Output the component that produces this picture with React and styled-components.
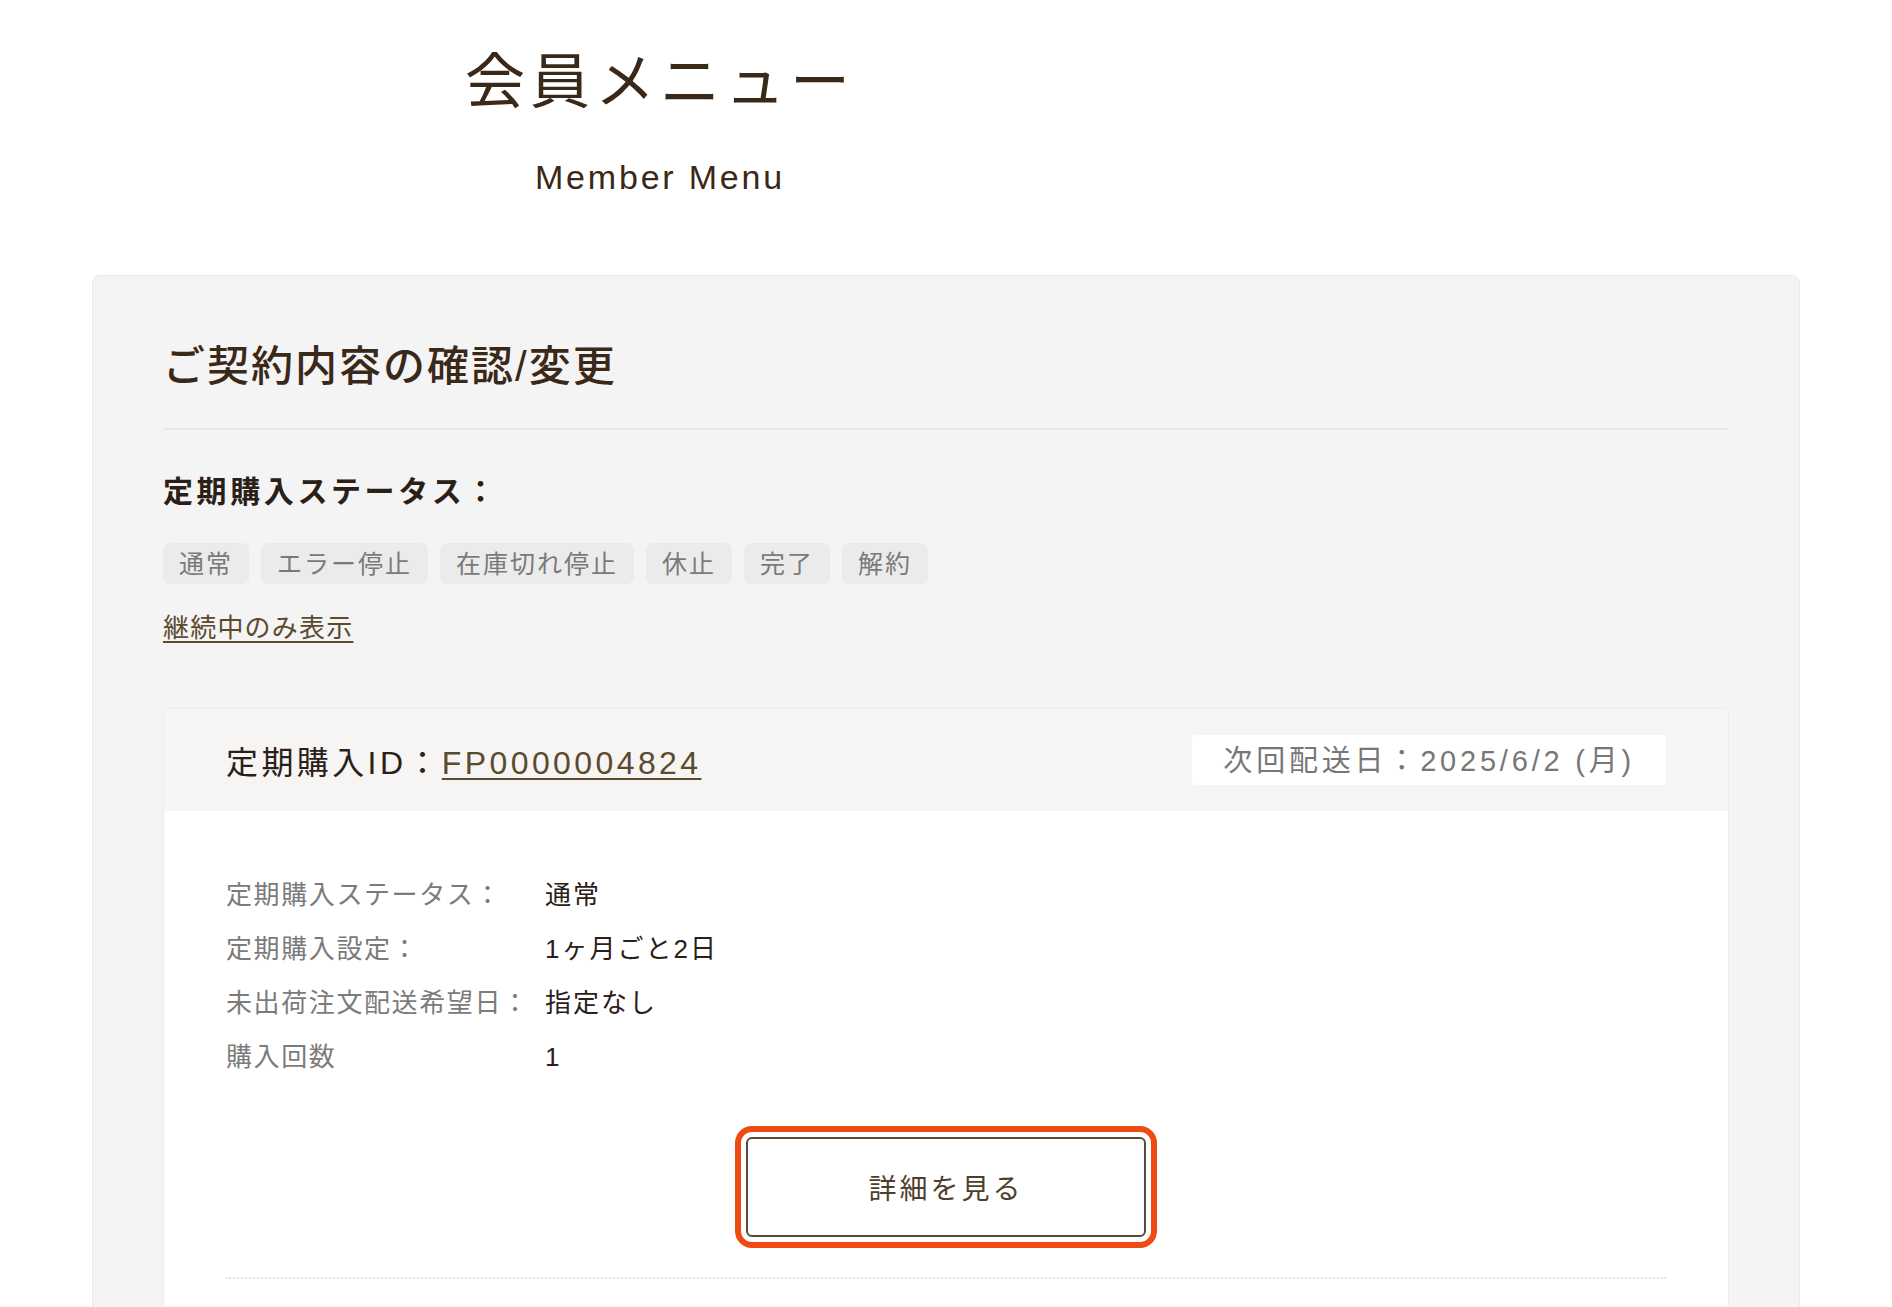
import React from 'react';
import styled, { createGlobalStyle } from 'styled-components';

const GlobalStyle = createGlobalStyle`
  html, body {
    margin: 0;
    padding: 0;
    background: #fff;
  }
  body {
    font-family: "Liberation Sans", "Noto Sans CJK JP", sans-serif;
    color: #2b2018;
  }
`;

const Page = styled.div`
  padding: 0 92px 120px;
`;

const Header = styled.header`
  width: 1136px;
  padding-top: 52px;
  text-align: center;
`;

const Title = styled.h1`
  margin: 0;
  font-size: 60px;
  line-height: 62px;
  font-weight: 400;
  letter-spacing: 5px;
  color: #3a2818;
`;

const Subtitle = styled.p`
  margin: 43px 0 0;
  font-size: 34px;
  line-height: 40px;
  letter-spacing: 2.8px;
  color: #3a2818;
`;

const Card = styled.section`
  margin-top: 78px;
  padding: 62px 70px 80px;
  background: #f4f4f4;
  border: 1px solid #e9e9e9;
  border-radius: 8px;
`;

const CardTitle = styled.h2`
  margin: 0;
  padding-bottom: 32px;
  border-bottom: 2px solid #e8e8e8;
  font-size: 42px;
  line-height: 58px;
  font-weight: 500;
  letter-spacing: 2px;
  color: #3a2818;
`;

const SectionLabel = styled.h3`
  margin: 42px 0 0;
  font-size: 30px;
  line-height: 40px;
  font-weight: 700;
  letter-spacing: 3.6px;
  color: #2b2018;
`;

const TagList = styled.ul`
  display: flex;
  gap: 12px;
  margin: 31px 0 0;
  padding: 0;
  list-style: none;
`;

const Tag = styled.li`
  padding: 0 16px;
  height: 41px;
  line-height: 42px;
  font-size: 25px;
  letter-spacing: 2px;
  color: #7a7a7a;
  background: #ebebeb;
  border-radius: 7px;
`;

const FilterLink = styled.a`
  display: inline-block;
  margin-top: 26px;
  font-size: 26px;
  line-height: 36px;
  letter-spacing: 1.2px;
  color: #5b4a2e;
  text-decoration: underline;
  text-underline-offset: 4px;
  text-decoration-thickness: 2px;
`;

const Subscription = styled.article`
  margin-top: 62px;
  background: #fff;
  border: 1px solid #ececec;
  border-radius: 4px;
  overflow: hidden;
`;

const SubHeader = styled.div`
  display: flex;
  align-items: center;
  justify-content: space-between;
  height: 102px;
  padding: 0 62px;
  background: #f6f5f3;
`;

const SubId = styled.div`
  font-size: 32px;
  letter-spacing: 3.4px;
  font-weight: 400;
  color: #2b2018;
`;

const IdLink = styled.a`
  color: #5b4a2e;
  text-decoration: underline;
  text-underline-offset: 4px;
  text-decoration-thickness: 2px;
`;

const NextDate = styled.div`
  height: 50px;
  line-height: 52px;
  padding: 0 31px;
  background: #fff;
  border-radius: 4px;
  font-size: 29px;
  letter-spacing: 3.8px;
  color: #777;
`;

const SubBody = styled.div`
  padding: 57px 62px 80px;
`;

const InfoList = styled.dl`
  display: grid;
  grid-template-columns: 319px 1fr;
  margin: 0;
  font-size: 26px;
  line-height: 54px;
  letter-spacing: 1.6px;
`;

const InfoLabel = styled.dt`
  color: #7b7b7b;
`;

const InfoValue = styled.dd`
  margin: 0;
  color: #2b2018;
  letter-spacing: 2px;
`;

const ButtonRow = styled.div`
  display: flex;
  justify-content: center;
  margin-top: 53px;
`;

const DetailButton = styled.button`
  width: 400px;
  height: 100px;
  background: #fff;
  border: 2px solid #5a4a3a;
  border-radius: 6px;
  outline: 6px solid #ee4a14;
  outline-offset: 5px;
  font-family: inherit;
  font-size: 28px;
  letter-spacing: 3px;
  color: #4e3f2c;
  cursor: pointer;
`;

const Dotted = styled.hr`
  margin: 40px 0 0;
  border: 0;
  border-top: 2px dotted #e4e4e4;
`;

const tags = ['通常', 'エラー停止', '在庫切れ停止', '休止', '完了', '解約'];

const info = [
  ['定期購入ステータス：', '通常'],
  ['定期購入設定：', '1ヶ月ごと2日'],
  ['未出荷注文配送希望日：', '指定なし'],
  ['購入回数', '1'],
];

export default function App() {
  return (
    <>
      <GlobalStyle />
      <Page>
        <Header>
          <Title>会員メニュー</Title>
          <Subtitle>Member Menu</Subtitle>
        </Header>
        <Card>
          <CardTitle>ご契約内容の確認/変更</CardTitle>
          <SectionLabel>定期購入ステータス：</SectionLabel>
          <TagList>
            {tags.map(t => <Tag key={t}>{t}</Tag>)}
          </TagList>
          <FilterLink href="#">継続中のみ表示</FilterLink>
          <Subscription>
            <SubHeader>
              <SubId>定期購入ID：<IdLink href="#">FP0000004824</IdLink></SubId>
              <NextDate>次回配送日：2025/6/2 (月)</NextDate>
            </SubHeader>
            <SubBody>
              <InfoList>
                {info.map(([label, value]) => (
                  <React.Fragment key={label}>
                    <InfoLabel>{label}</InfoLabel>
                    <InfoValue>{value}</InfoValue>
                  </React.Fragment>
                ))}
              </InfoList>
              <ButtonRow>
                <DetailButton>詳細を見る</DetailButton>
              </ButtonRow>
              <Dotted />
            </SubBody>
          </Subscription>
        </Card>
      </Page>
    </>
  );
}
